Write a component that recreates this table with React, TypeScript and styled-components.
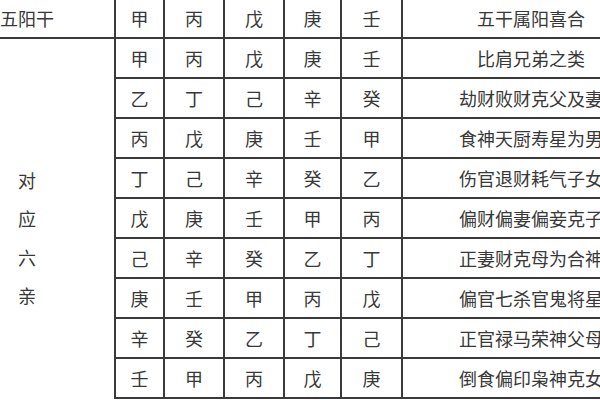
import React from 'react'
import styled, { createGlobalStyle } from 'styled-components'

const GlobalStyle = createGlobalStyle`
  html, body {
    margin: 0;
    padding: 0;
    width: 600px;
    height: 400px;
    overflow: hidden;
    background: #ffffff;
  }
`

const Page = styled.div`
  width: 600px;
  height: 400px;
  overflow: hidden;
  font-family: 'Noto Sans CJK SC', 'Noto Sans', sans-serif;
  color: #383838;
`

const Table = styled.table`
  border-collapse: collapse;
  table-layout: fixed;
  width: 660px;
  margin-top: -1px;
  font-size: 18px;
`

const Col = styled.col<{ $w: number }>`
  width: ${(p) => p.$w}px;
`

const Cell = styled.td`
  height: 38px;
  padding: 0;
  border: 2px solid #3a3a3a;
  text-align: center;
  vertical-align: middle;
  line-height: 20px;
  white-space: nowrap;
  overflow: hidden;
`

const HeadCell = styled(Cell)`
  border-top: none;
`

const LabelCell = styled(HeadCell)`
  text-align: left;
  border-left: none;
`

const SideCell = styled.td`
  padding: 131px 0 0 17px;
  border: 2px solid #3a3a3a;
  border-left: none;
  border-bottom: none;
  vertical-align: top;
  font-size: 18px;
`

const SideChar = styled.div`
  height: 38.3px;
  line-height: 20px;
  width: 20px;
  text-align: center;
`

const colWidths = [115, 49, 60, 60, 57, 61, 258]

const stems = ['甲', '丙', '戊', '庚', '壬']

const rows: { stems: string[]; desc: string }[] = [
  { stems: ['甲', '丙', '戊', '庚', '壬'], desc: '比肩兄弟之类' },
  { stems: ['乙', '丁', '己', '辛', '癸'], desc: '劫财败财克父及妻' },
  { stems: ['丙', '戊', '庚', '壬', '甲'], desc: '食神天厨寿星为男' },
  { stems: ['丁', '己', '辛', '癸', '乙'], desc: '伤官退财耗气子女' },
  { stems: ['戊', '庚', '壬', '甲', '丙'], desc: '偏财偏妻偏妾克子' },
  { stems: ['己', '辛', '癸', '乙', '丁'], desc: '正妻财克母为合神' },
  { stems: ['庚', '壬', '甲', '丙', '戊'], desc: '偏官七杀官鬼将星' },
  { stems: ['辛', '癸', '乙', '丁', '己'], desc: '正官禄马荣神父母' },
  { stems: ['壬', '甲', '丙', '戊', '庚'], desc: '倒食偏印枭神克女' }
]

const App: React.FC = () => {
  return (
    <Page>
      <GlobalStyle />
      <Table>
        <colgroup>
          {colWidths.map((w, i) => (
            <Col key={i} $w={w} />
          ))}
        </colgroup>
        <tbody>
          <tr>
            <LabelCell>五阳干</LabelCell>
            {stems.map((s, i) => (
              <HeadCell key={i}>{s}</HeadCell>
            ))}
            <HeadCell>五干属阳喜合</HeadCell>
          </tr>
          {rows.map((r, i) => (
            <tr key={i}>
              {i === 0 && (
                <SideCell rowSpan={rows.length}>
                  {['对', '应', '六', '亲'].map((c) => (
                    <SideChar key={c}>{c}</SideChar>
                  ))}
                </SideCell>
              )}
              {r.stems.map((s, j) => (
                <Cell key={j}>{s}</Cell>
              ))}
              <Cell>{r.desc}</Cell>
            </tr>
          ))}
        </tbody>
      </Table>
    </Page>
  )
}

export default App
